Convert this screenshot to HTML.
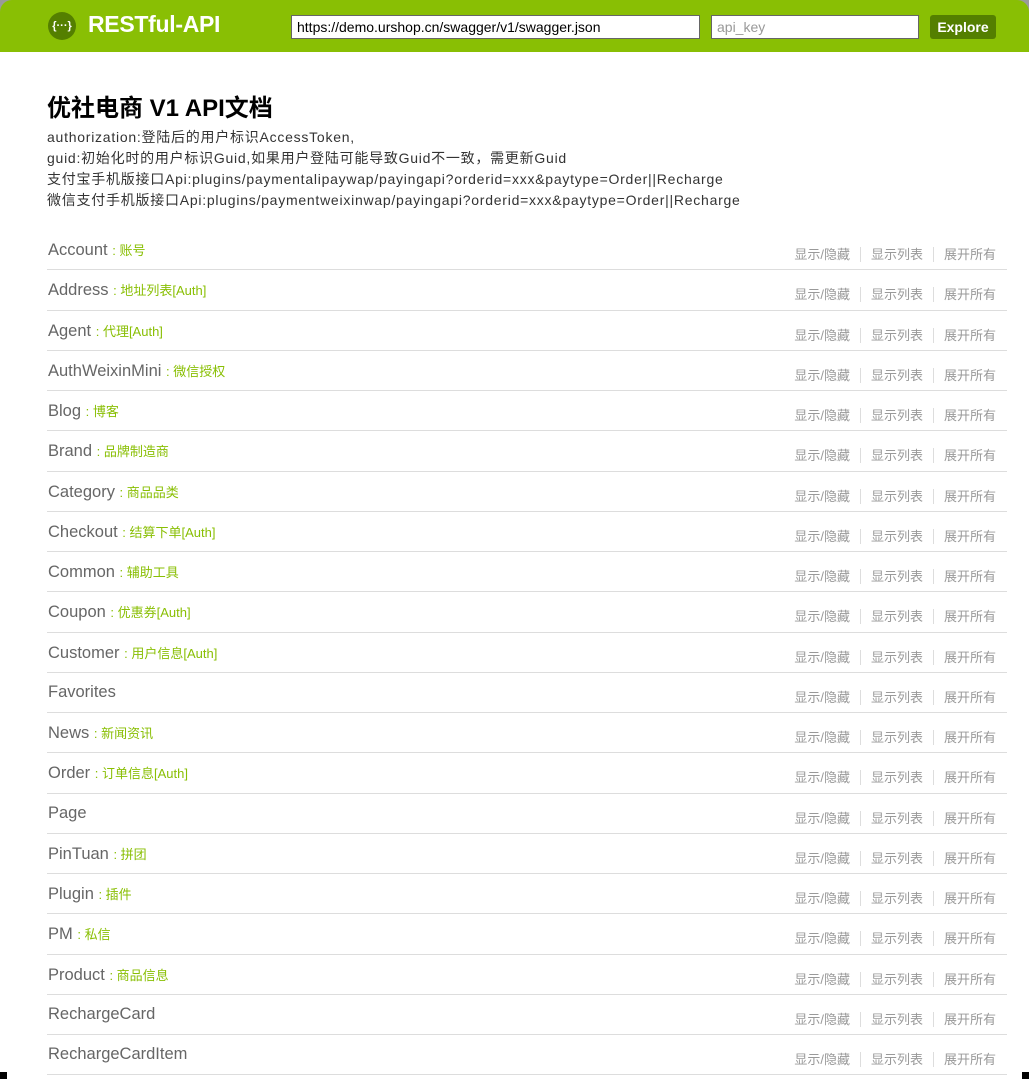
<!DOCTYPE html>
<html><head><meta charset="utf-8"><style>
*{margin:0;padding:0;box-sizing:border-box}
html,body{width:1029px;height:1079px;overflow:hidden;background:#fff}
body{font-family:"Liberation Sans","Noto Sans CJK SC",sans-serif;position:relative}
.corner{position:absolute;width:7px;height:7px;background:#000;bottom:0}
#hdr{position:absolute;left:0;top:0;width:1029px;height:52px;background:#89bf04;border-radius:12px 12px 0 0}
.bgc{position:absolute;top:0;width:12px;height:12px;background:#9a9a9a}
.logo{position:absolute;left:48px;top:12px;width:28px;height:28px;border-radius:50%;background:#547f00;color:#fff;font-size:11px;font-weight:bold;text-align:center;line-height:28px}
.brand{position:absolute;left:88px;top:11px;color:#fff;font-weight:bold;font-size:23px;letter-spacing:-0.3px}
.in{position:absolute;top:15px;height:24px;background:#fff;border:1px solid #666;font-size:14px;line-height:22px;padding-left:5px;font-family:"Liberation Sans",sans-serif}
.btn{position:absolute;left:930px;top:15px;width:66px;height:24px;background:#547f00;border-radius:3px;color:#fff;font-weight:bold;font-size:14px;text-align:center;line-height:24px}
h1{position:absolute;left:47px;top:88px;font-size:24px;font-weight:bold;color:#000}
.desc{position:absolute;left:47px;top:127px;font-size:14px;line-height:21px;color:#333;letter-spacing:0.75px;white-space:nowrap}
.list{position:absolute;left:47px;top:230px;width:960px}
.row{height:40.25px;border-bottom:1px solid #ddd;position:relative}
.nm{position:absolute;left:1px;top:10px;font-size:16.5px;color:#666}
.nm span{font-size:13px;color:#89bf04}
.ops{position:absolute;right:11px;top:14px;font-size:13px;color:#999}
.ops i{font-style:normal;display:inline-block;width:1px;height:15px;background:#ddd;vertical-align:-3px;margin:0 10px}
</style></head><body>
<div class="bgc" style="left:0"></div><div class="bgc" style="right:0"></div>
<div id="hdr">
<div class="logo">{···}</div>
<div class="brand">RESTful-API</div>
<div class="in" style="left:291px;width:409px;color:#000">https://demo.urshop.cn/swagger/v1/swagger.json</div>
<div class="in" style="left:711px;width:208px;color:#999">api_key</div>
<div class="btn">Explore</div>
</div>
<h1>优社电商 V1 API文档</h1>
<div class="desc">authorization:登陆后的用户标识AccessToken,<br>guid:初始化时的用户标识Guid,如果用户登陆可能导致Guid不一致，需更新Guid<br>支付宝手机版接口Api:plugins/paymentalipaywap/payingapi?orderid=xxx&amp;paytype=Order||Recharge<br>微信支付手机版接口Api:plugins/paymentweixinwap/payingapi?orderid=xxx&amp;paytype=Order||Recharge</div>
<div class="list">
<div class="row"><div class="nm">Account <span>: 账号</span></div><div class="ops">显示/隐藏<i></i>显示列表<i></i>展开所有</div></div>
<div class="row"><div class="nm">Address <span>: 地址列表[Auth]</span></div><div class="ops">显示/隐藏<i></i>显示列表<i></i>展开所有</div></div>
<div class="row"><div class="nm">Agent <span>: 代理[Auth]</span></div><div class="ops">显示/隐藏<i></i>显示列表<i></i>展开所有</div></div>
<div class="row"><div class="nm">AuthWeixinMini <span>: 微信授权</span></div><div class="ops">显示/隐藏<i></i>显示列表<i></i>展开所有</div></div>
<div class="row"><div class="nm">Blog <span>: 博客</span></div><div class="ops">显示/隐藏<i></i>显示列表<i></i>展开所有</div></div>
<div class="row"><div class="nm">Brand <span>: 品牌制造商</span></div><div class="ops">显示/隐藏<i></i>显示列表<i></i>展开所有</div></div>
<div class="row"><div class="nm">Category <span>: 商品品类</span></div><div class="ops">显示/隐藏<i></i>显示列表<i></i>展开所有</div></div>
<div class="row"><div class="nm">Checkout <span>: 结算下单[Auth]</span></div><div class="ops">显示/隐藏<i></i>显示列表<i></i>展开所有</div></div>
<div class="row"><div class="nm">Common <span>: 辅助工具</span></div><div class="ops">显示/隐藏<i></i>显示列表<i></i>展开所有</div></div>
<div class="row"><div class="nm">Coupon <span>: 优惠券[Auth]</span></div><div class="ops">显示/隐藏<i></i>显示列表<i></i>展开所有</div></div>
<div class="row"><div class="nm">Customer <span>: 用户信息[Auth]</span></div><div class="ops">显示/隐藏<i></i>显示列表<i></i>展开所有</div></div>
<div class="row"><div class="nm">Favorites</div><div class="ops">显示/隐藏<i></i>显示列表<i></i>展开所有</div></div>
<div class="row"><div class="nm">News <span>: 新闻资讯</span></div><div class="ops">显示/隐藏<i></i>显示列表<i></i>展开所有</div></div>
<div class="row"><div class="nm">Order <span>: 订单信息[Auth]</span></div><div class="ops">显示/隐藏<i></i>显示列表<i></i>展开所有</div></div>
<div class="row"><div class="nm">Page</div><div class="ops">显示/隐藏<i></i>显示列表<i></i>展开所有</div></div>
<div class="row"><div class="nm">PinTuan <span>: 拼团</span></div><div class="ops">显示/隐藏<i></i>显示列表<i></i>展开所有</div></div>
<div class="row"><div class="nm">Plugin <span>: 插件</span></div><div class="ops">显示/隐藏<i></i>显示列表<i></i>展开所有</div></div>
<div class="row"><div class="nm">PM <span>: 私信</span></div><div class="ops">显示/隐藏<i></i>显示列表<i></i>展开所有</div></div>
<div class="row"><div class="nm">Product <span>: 商品信息</span></div><div class="ops">显示/隐藏<i></i>显示列表<i></i>展开所有</div></div>
<div class="row"><div class="nm">RechargeCard</div><div class="ops">显示/隐藏<i></i>显示列表<i></i>展开所有</div></div>
<div class="row"><div class="nm">RechargeCardItem</div><div class="ops">显示/隐藏<i></i>显示列表<i></i>展开所有</div></div>
</div>
<div class="corner" style="left:0"></div><div class="corner" style="right:0"></div>
</body></html>
